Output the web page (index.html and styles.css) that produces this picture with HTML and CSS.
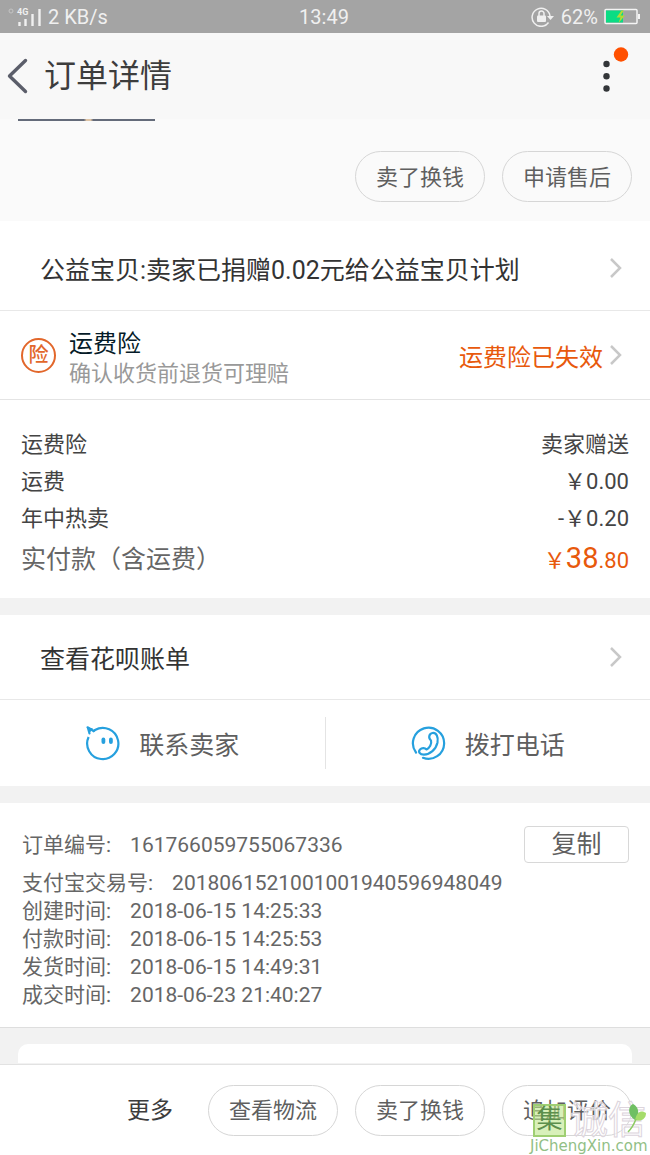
FILE: index.html
```html
<!DOCTYPE html>
<html lang="zh-CN">
<head>
<meta charset="utf-8">
<meta name="viewport" content="width=device-width, initial-scale=1">
<title>订单详情</title>
<link rel="stylesheet" href="styles.css">
</head>
<body>
<div class="status">
  <div class="status-side">
    <svg class="signal" width="34" height="20" viewBox="0 0 34 20" aria-hidden="true">
      <circle cx="3" cy="4" r="2" fill="none" stroke="#c4c4c4" stroke-width="1"/>
      <text x="9" y="8" class="signal-text">4G</text>
      <path d="M11.500 15v4M17.500 12v7M24.500 7v12M31.500 2v17" stroke="#f0f0f0" stroke-width="2.400"/>
    </svg>
    <span>2 KB/s</span>
  </div>
  <span>13:49</span>
  <div class="status-side status-right">
    <svg width="24" height="20" viewBox="0 0 24 20" aria-hidden="true">
      <path d="M17.500 15.500A9 9 0 1 1 19 9" fill="none" stroke="#f0f0f0" stroke-width="1.500"/>
      <path d="M16 9h7l-3.500 4z" fill="#f0f0f0"/>
      <rect x="6" y="8.500" width="9" height="6.500" rx="1" fill="#f0f0f0"/>
      <path d="M8 9V6.500a2.500 2.500 0 0 1 5 0V9" fill="none" stroke="#f0f0f0" stroke-width="1.500"/>
    </svg>
    <span>62%</span>
    <svg width="36" height="18" viewBox="0 0 36 18" aria-hidden="true">
      <rect x="1" y="1.500" width="32" height="14" rx="1" fill="none" stroke="#f4f4f4" stroke-width="1.500"/>
      <path d="M2 2.500h17v12H2z" fill="#0bdc84"/>
      <path d="M34 6h2v5h-2z" fill="#f4f4f4"/>
      <path d="M17.500 2.500l-5 7h4l-2 5.500 6.500-7.500h-4.500l3.500-5z" fill="#b5d935"/>
    </svg>
  </div>
</div>

<header class="header">
  <button class="back" type="button" aria-label="返回">
    <svg width="24" height="38" viewBox="0 0 24 38"><path d="M19.500 3.500L3.500 19l16 15.500" fill="none" stroke="#5b5e6a" stroke-width="3.400" stroke-linecap="round" stroke-linejoin="round"/></svg>
  </button>
  <h1 class="title">订单详情</h1>
  <button class="menu" type="button" aria-label="更多选项">
    <svg width="36" height="48" viewBox="0 0 36 48"><g fill="#333639"><circle cx="10.500" cy="20" r="3.200"/><circle cx="10.500" cy="32.300" r="3.200"/><circle cx="10.500" cy="44.500" r="3.200"/></g><circle cx="25" cy="10.500" r="7.200" fill="#ff5000"/></svg>
  </button>
</header>

<main class="content">
  <section class="product">
    <div class="thumb-edge"></div>
    <div class="actions">
      <button class="pill" type="button">卖了换钱</button>
      <button class="pill" type="button">申请售后</button>
    </div>
  </section>

  <a class="row charity" href="#charity">
    <span>公益宝贝:卖家已捐赠0.02元给公益宝贝计划</span>
    <svg class="chevron" viewBox="0 0 14 22"><path d="M2 2l9 9-9 9"/></svg>
  </a>

  <a class="row insurance" href="#insurance">
    <span class="badge">险</span>
    <span class="insurance-text">
      <strong class="insurance-name">运费险</strong>
      <span class="insurance-note">确认收货前退货可理赔</span>
    </span>
    <span class="insurance-state">运费险已失效</span>
    <svg class="chevron" viewBox="0 0 14 22"><path d="M2 2l9 9-9 9"/></svg>
  </a>

  <dl class="prices">
    <div class="price"><dt>运费险</dt><dd>卖家赠送</dd></div>
    <div class="price"><dt>运费</dt><dd>￥0.00</dd></div>
    <div class="price"><dt>年中热卖</dt><dd>-￥0.20</dd></div>
    <div class="price total"><dt>实付款（含运费）</dt><dd>￥<span class="yuan">38</span>.80</dd></div>
  </dl>

  <a class="row bill" href="#bill">
    <span>查看花呗账单</span>
    <svg class="chevron" viewBox="0 0 14 22"><path d="M2 2l9 9-9 9"/></svg>
  </a>

  <div class="contact">
    <button class="contact-item" type="button">
      <svg width="36" height="36" viewBox="0 0 36 36" aria-hidden="true">
        <path d="M3.600 12A15.600 15.600 0 1 0 10 5L8 6.500" fill="none" stroke="#26a0de" stroke-width="2.200" stroke-linejoin="round"/>
        <path d="M2.500 2.300L8.500 6M2.800 2.500L4.500 8.500" fill="none" stroke="#26a0de" stroke-width="2.200" stroke-linecap="round"/>
        <path d="M2 2l6 1.500-3 4z" fill="#26a0de"/>
        <rect x="16.500" y="12.500" width="3.800" height="6.500" rx="1.900" fill="#26a0de"/><rect x="24" y="12.500" width="3.800" height="6.500" rx="1.900" fill="#26a0de"/>
      </svg>
      <span>联系卖家</span>
    </button>
    <button class="contact-item" type="button">
      <svg width="36" height="36" viewBox="0 0 36 36" aria-hidden="true" fill="none" stroke="#26a0de" stroke-width="2.200" stroke-linecap="round">
        <path d="M5 27.500A15.600 15.600 0 1 1 12 32.800"/>
        <path d="M20 15.500C17 13 18 8.500 21.500 8c4-.5 6 4 5 9.500C25 24.500 19 29.500 13 29.700 8.500 29.700 7 26.500 9 24.500c2-2 5-1.500 6.500 0C18.500 23 21 19 20 15.500z" stroke-linejoin="round"/>
      </svg>
      <span>拨打电话</span>
    </button>
  </div>

  <section class="order">
    <div class="order-head">
      <p class="line"><span>订单编号:</span><span>161766059755067336</span></p>
      <button class="copy" type="button">复制</button>
    </div>
    <p class="line"><span>支付宝交易号:</span><span>2018061521001001940596948049</span></p>
    <p class="line"><span>创建时间:</span><span>2018-06-15 14:25:33</span></p>
    <p class="line"><span>付款时间:</span><span>2018-06-15 14:25:53</span></p>
    <p class="line"><span>发货时间:</span><span>2018-06-15 14:49:31</span></p>
    <p class="line"><span>成交时间:</span><span>2018-06-23 21:40:27</span></p>
  </section>
  <div class="next-card"></div>
</main>

<footer class="footer">
  <button class="more" type="button">更多</button>
  <button class="pill" type="button">查看物流</button>
  <button class="pill" type="button">卖了换钱</button>
  <button class="pill" type="button">追加评价</button>
  <div class="watermark">
    <div class="mark-top">
      <span class="mark-box">集</span><span class="mark-name">诚信</span>
      <svg class="leaf" width="20" height="30" viewBox="0 0 20 30" aria-hidden="true"><path d="M8 17C0 12 1 3 6 1c6 3 7 10 2 16z" fill="#6fbf63"/><path d="M8 17C10 8 15 7 19 10c0 6-5 9-11 7z" fill="#a5dc6a"/><path d="M9 16Q6 24 1 29" fill="none" stroke="#8ccb62" stroke-width="1.500"/></svg>
    </div>
    <div class="mark-site">JiChengXin.com</div>
  </div>
</footer>
</body>
</html>
```
FILE: styles.css
```css
* {
  box-sizing: border-box;
}

body {
  margin: 0;
  min-height: 100vh;
  display: flex;
  flex-direction: column;
  background: #f2f2f2;
  color: #333;
  font-family: Roboto, "Noto Sans CJK SC", sans-serif;
  font-size: 22px;
}

button {
  margin: 0;
  padding: 0;
  border: 0;
  background: none;
  color: inherit;
  font: inherit;
  cursor: pointer;
}

a {
  color: inherit;
  text-decoration: none;
}

p,
dl,
dd {
  margin: 0;
}

.status {
  display: flex;
  align-items: center;
  height: 33px;
  padding: 0 10px 0 8px;
  background: #a4a4a4;
  color: #f0f0f0;
  font-size: 20px;
}

.status-side {
  flex: 1;
  display: flex;
  align-items: center;
  gap: 6px;
}

.status-right {
  justify-content: flex-end;
}

.signal-text {
  font: bold 9px Roboto, sans-serif;
  fill: #f0f0f0;
}

.header {
  display: flex;
  align-items: center;
  height: 86px;
  padding: 0 18px 0 6px;
  background: #f8f8f8;
}

.back,
.menu {
  display: flex;
}

.menu {
  margin: 0 0 16px auto;
}

.title {
  margin: 0 0 0 14px;
  color: #3d3d3d;
  font-size: 32px;
  font-weight: 400;
  line-height: 48px;
}

.content {
  flex: 1;
}

.product {
  padding: 0 18px 19px;
  background: #fafafa;
}

.thumb-edge {
  width: 137px;
  height: 2px;
  background: linear-gradient(90deg, #646b7a 48%, #dfc4a5 50%, #dfc4a5 53%, #646b7a 55%);
}

.actions {
  display: flex;
  justify-content: flex-end;
  gap: 17px;
  padding-top: 30px;
}

.pill {
  width: 130px;
  height: 51px;
  padding-bottom: 4px;
  border: 1px solid #d6d6d6;
  border-radius: 26px;
  color: #5f5f5f;
}

.row {
  display: flex;
  align-items: center;
  padding: 0 27px 0 40px;
  background: #fff;
  font-size: 25px;
}

.chevron {
  width: 14px;
  height: 22px;
  margin-left: auto;
  fill: none;
  stroke: #c8c8c8;
  stroke-width: 2.500;
}

.charity {
  min-height: 90px;
  padding-top: 4px;
  border-bottom: 1px solid #e8e8e8;
}

.insurance {
  min-height: 89px;
  padding-left: 21px;
  border-bottom: 1px solid #e4e4e4;
}

.badge {
  display: flex;
  align-items: center;
  justify-content: center;
  width: 35px;
  height: 35px;
  border: 2px solid #e2672b;
  border-radius: 50%;
  color: #e2672b;
  font-size: 20px;
  font-weight: 500;
  line-height: 30px;
}

.insurance-text {
  display: flex;
  flex-direction: column;
  margin-left: 13px;
  padding-top: 7px;
  line-height: 30px;
}

.insurance-name {
  color: #051b28;
  font-size: 24px;
  font-weight: 400;
}

.insurance-note {
  color: #999;
  font-size: 22px;
}

.insurance-state {
  margin-left: auto;
  color: #e8590c;
  font-size: 24px;
}

.insurance .chevron {
  margin-left: 6px;
}

.prices {
  padding: 26px 21px 16px;
  background: #fff;
}

.price {
  display: flex;
  justify-content: space-between;
  line-height: 37px;
  color: #444;
}

.total {
  align-items: baseline;
  line-height: 43px;
  color: #666;
}

.total dt {
  font-size: 25px;
}

.total dd {
  color: #e8590c;
}

.yuan {
  font-size: 29px;
}

.bill {
  min-height: 85px;
  margin-top: 17px;
  border-bottom: 1px solid #e8e8e8;
}

.contact {
  display: flex;
  padding: 17px 0;
  background: #fff;
}

.contact-item {
  flex: 1;
  display: flex;
  align-items: center;
  justify-content: center;
  gap: 18px;
  height: 52px;
  color: #5f5f5f;
  font-size: 25px;
}

.contact-item:first-child {
  border-right: 1px solid #e4e4e4;
}

.order {
  margin-top: 17px;
  padding: 23px 21px 18px 22px;
  border-bottom: 1px solid #dedede;
  background: #fff;
  color: #666;
  font-size: 21px;
  line-height: 28px;
}

.order-head {
  display: flex;
  align-items: center;
  justify-content: space-between;
  margin-bottom: 6px;
}

.line {
  display: flex;
  gap: 19px;
}

.copy {
  width: 105px;
  height: 37px;
  border: 1px solid #d8d8d8;
  border-radius: 4px;
  color: #5f5f5f;
  font-size: 25px;
  line-height: 34px;
}

.next-card {
  height: 19px;
  margin: 16px 18px 0;
  border-radius: 10px 10px 0 0;
  background: #fff;
}

.footer {
  position: relative;
  display: flex;
  align-items: center;
  justify-content: flex-end;
  gap: 17px;
  height: 91px;
  padding: 0 18px;
  border-top: 1px solid #e2e2e2;
  background: #fff;
}

.more {
  margin-right: 18px;
  padding-bottom: 4px;
  color: #3d3d3d;
  font-size: 23px;
}

.watermark {
  position: absolute;
  right: 0;
  bottom: 0;
  width: 120px;
  pointer-events: none;
}

.mark-top {
  display: flex;
  align-items: center;
  gap: 4px;
  padding-left: 3px;
}

.mark-box {
  width: 33px;
  height: 33px;
  border: 2px solid #9fcf72;
  background: rgba(190, 230, 140, 0.6);
  color: #5c8f4c;
  font-size: 26px;
  line-height: 26px;
  text-align: center;
}

.mark-name {
  color: rgba(255, 255, 255, 0.6);
  font-size: 38px;
  line-height: 34px;
  -webkit-text-stroke: 1px #dcd4dc;
}

.leaf {
  position: absolute;
  top: 0;
  right: 3px;
}

.mark-site {
  color: #92bf86;
  font-family: "DejaVu Sans", sans-serif;
  font-size: 15px;
  line-height: 18px;
}
```
